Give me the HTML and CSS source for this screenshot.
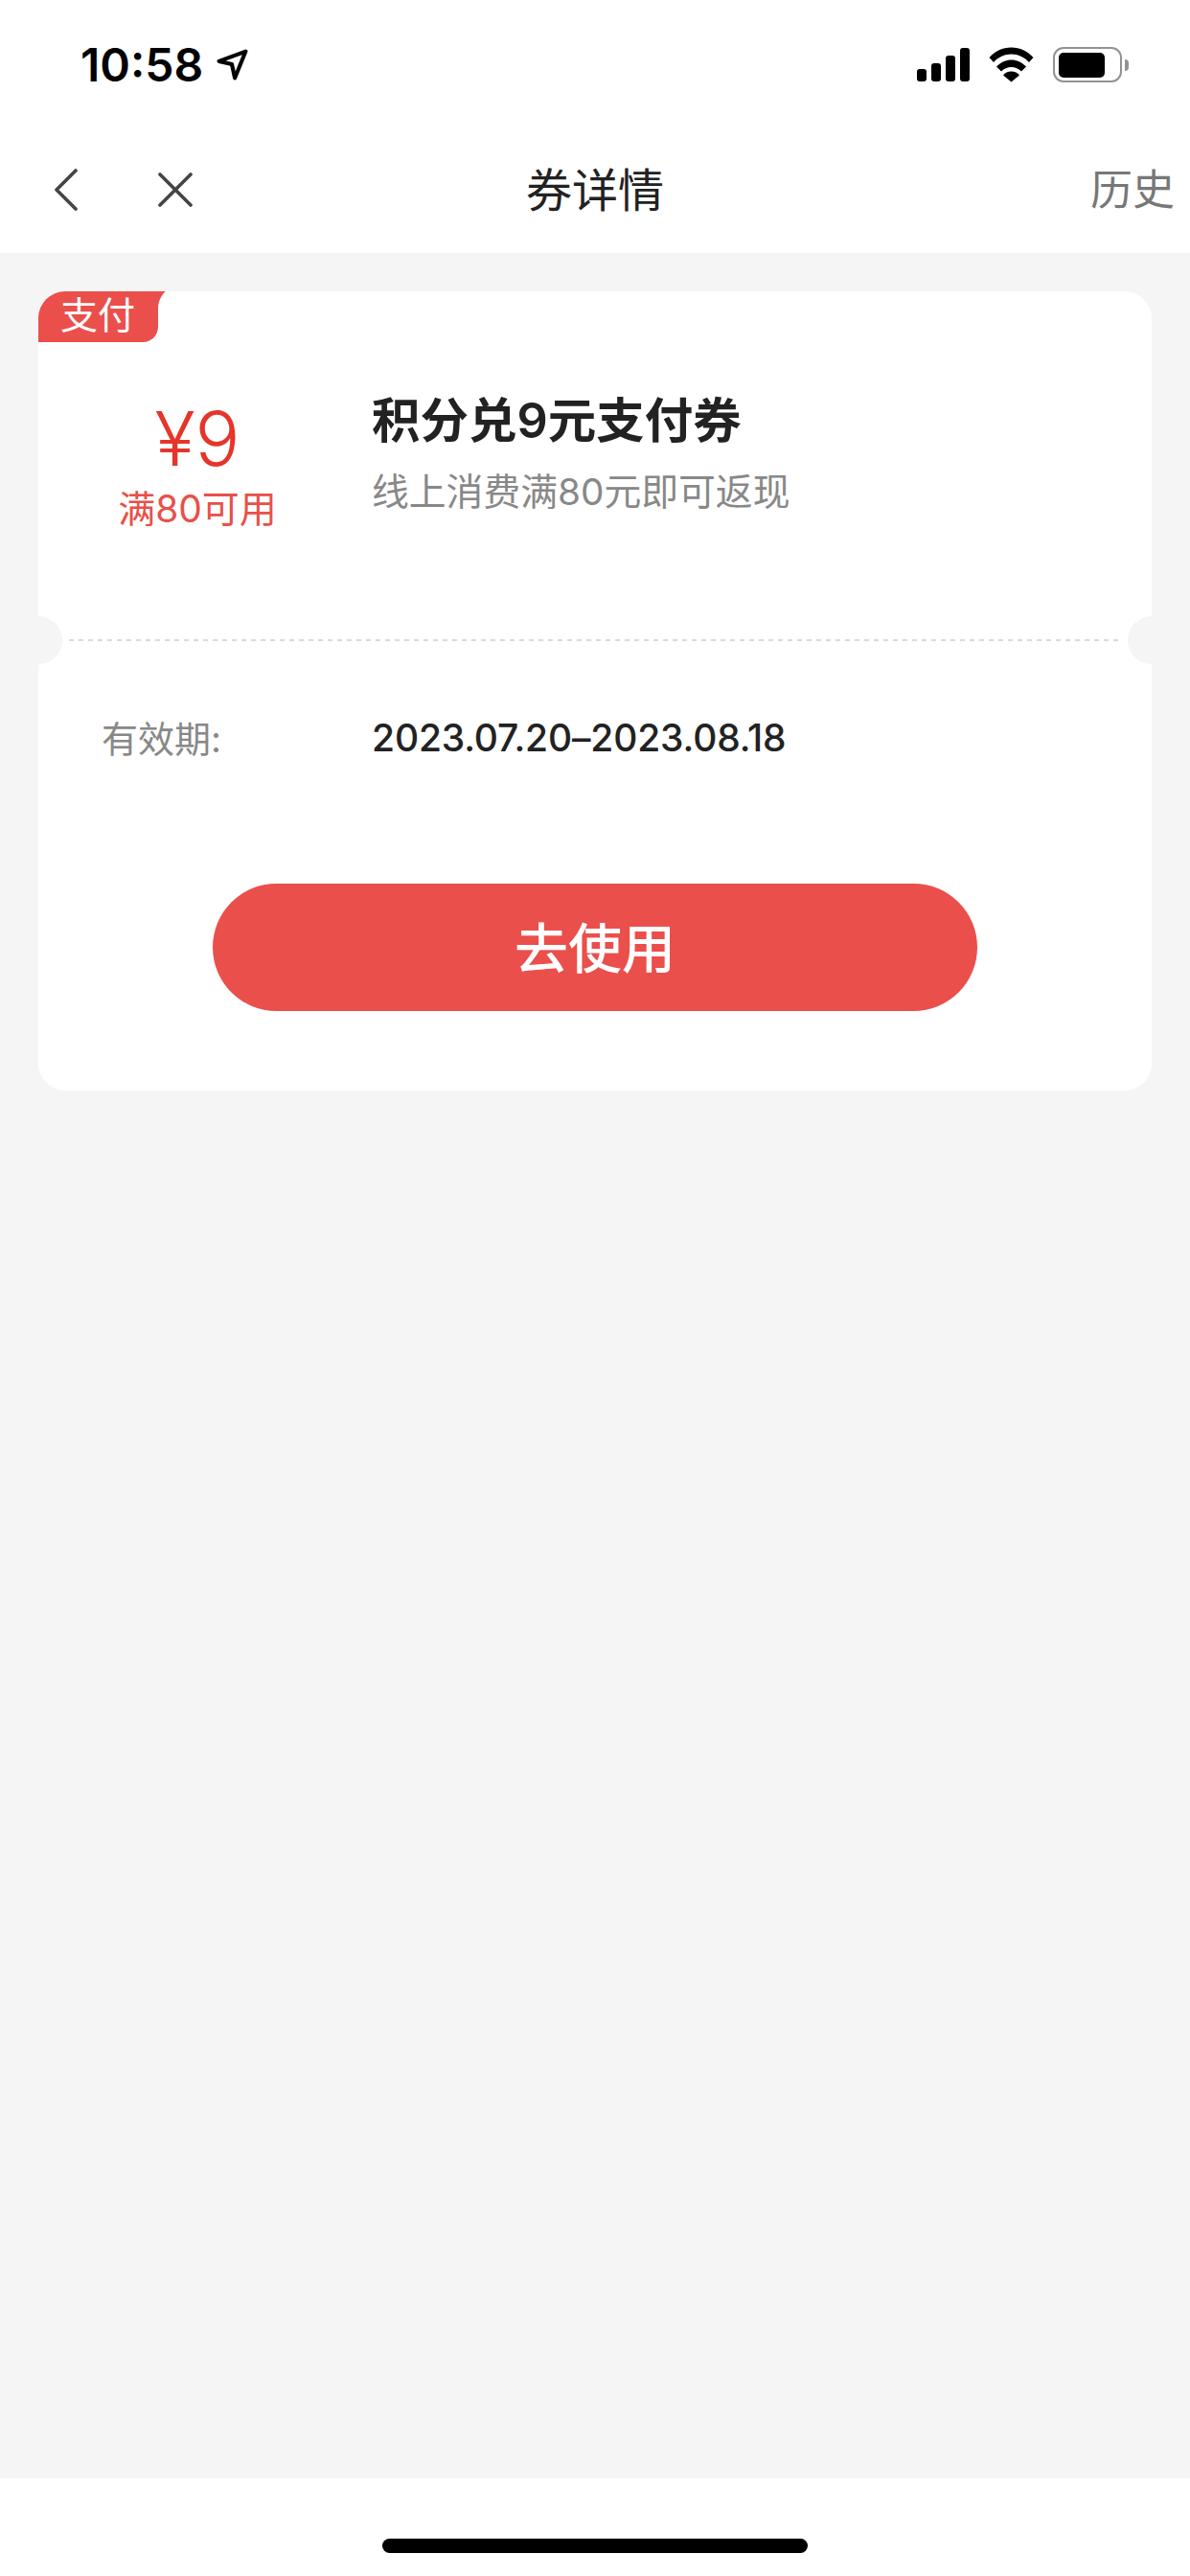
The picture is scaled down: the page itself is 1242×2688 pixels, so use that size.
FILE: index.html
```html
<!DOCTYPE html>
<html lang="zh-CN">
<head>
    <meta charset="UTF-8">
    <meta name="viewport" content="width=device-width, initial-scale=1.0">
    <title>券详情</title>
    <link rel="stylesheet" href="styles.css">
</head>
<body>
    <div class="status-bar">
        <div class="status-left">
            <span class="time">10:58</span>
            <svg class="location-icon" viewBox="0 0 32 32" width="33" height="33">
                <path d="M29.5 2.5L2.5 12.5L15.5 15.5L18.5 29.5Z" fill="none" stroke="#000" stroke-width="4" stroke-linejoin="round"/>
            </svg>
        </div>
        <div class="status-right">
            <div class="signal">
                <span class="bar bar-1"></span>
                <span class="bar bar-2"></span>
                <span class="bar bar-3"></span>
                <span class="bar bar-4"></span>
            </div>
            <svg class="wifi-icon" viewBox="0 0 47 37" width="47" height="37">
                <path d="M0.5 11C6.5 4.5 14.5 0.5 23.5 0.5S40.5 4.5 46.5 11L42 16C37 10.5 30.5 7.5 23.5 7.5S10 10.5 5 16Z"/>
                <path d="M8 20.5C12.5 16 18 13.5 23.5 13.5S34.5 16 39 20.5L34 25.5C31 22.5 27.5 21 23.5 21S16 22.5 13 25.5Z"/>
                <path d="M15 29.5C17 27 20 25.5 23.5 25.5S30 27 32 29.5L23.5 36.5Z"/>
            </svg>
            <div class="battery">
                <div class="battery-body"><div class="battery-level"></div></div>
                <div class="battery-tip"></div>
            </div>
        </div>
    </div>

    <div class="nav-bar">
        <div class="nav-left">
            <svg class="nav-icon back-icon" viewBox="0 0 24 44" width="24" height="44">
                <path d="M22 2L2 22L22 42" fill="none" stroke="#444" stroke-width="3.6" stroke-linecap="round" stroke-linejoin="round"/>
            </svg>
            <svg class="nav-icon close-icon" viewBox="0 0 36 36" width="36" height="36">
                <path d="M2 2L34 34M34 2L2 34" fill="none" stroke="#444" stroke-width="3.6" stroke-linecap="round"/>
            </svg>
        </div>
        <div class="nav-title">券详情</div>
        <div class="nav-right">历史</div>
    </div>

    <div class="content">
        <div class="coupon">
            <div class="tag">支付</div>
            <span class="notch notch-left"></span>
            <span class="notch notch-right"></span>

            <div class="offer">
                <div class="price-col">
                    <div class="price">¥9</div>
                    <div class="price-limit">满80可用</div>
                </div>
                <div class="offer-info">
                    <div class="offer-title">积分兑9元支付券</div>
                    <div class="offer-desc">线上消费满80元即可返现</div>
                </div>
            </div>

            <div class="divider"></div>

            <div class="validity">
                <span class="validity-label">有效期:</span>
                <span class="validity-date">2023.07.20–2023.08.18</span>
            </div>

            <button class="use-btn" type="button">去使用</button>
        </div>
    </div>

    <div class="home-area">
        <div class="home-indicator"></div>
    </div>
</body>
</html>
```

FILE: styles.css
```css
html {
    background-color: #f5f5f5;
}
body {
    margin: 0;
    padding: 0;
    height: 2688px;
    display: flex;
    flex-direction: column;
    font-family: Inter, "Noto Sans CJK SC", sans-serif;
}

/* status bar */
.status-bar {
    height: 135px;
    padding: 0 64px 0 84px;
    display: flex;
    align-items: center;
    justify-content: space-between;
    background-color: #fff;
}
.status-left {
    display: flex;
    align-items: center;
    gap: 14px;
}
.time {
    font-size: 48px;
    font-weight: 600;
    line-height: 56px;
    color: #000;
}
.status-right {
    display: flex;
    align-items: center;
    gap: 20px;
}
.signal {
    display: flex;
    align-items: flex-end;
    gap: 5px;
    height: 35px;
}
.bar {
    width: 10px;
    background-color: #000;
    border-radius: 3px;
}
.bar-1 { height: 13px; }
.bar-2 { height: 19px; }
.bar-3 { height: 27px; }
.bar-4 { height: 35px; }
.battery {
    display: flex;
    align-items: center;
    gap: 3px;
}
.battery-body {
    box-sizing: border-box;
    width: 72px;
    height: 37px;
    padding: 3.5px;
    border: 2.5px solid #929292;
    border-radius: 11px;
}
.battery-level {
    width: 48px;
    height: 100%;
    background-color: #000;
    border-radius: 5px;
}
.battery-tip {
    width: 4px;
    height: 12px;
    background-color: #929292;
    border-radius: 0 4px 4px 0;
}

/* nav bar */
.nav-bar {
    height: 126px;
    padding: 0 16px 3px;
    display: flex;
    align-items: center;
    background-color: #fff;
}
.nav-left {
    flex: 1;
    display: flex;
    align-items: center;
}
.back-icon {
    margin-left: 41px;
}
.close-icon {
    margin-left: 84px;
}
.nav-title {
    margin-bottom: 6px;
    font-size: 48px;
    color: #222;
}
.nav-right {
    flex: 1;
    margin-bottom: 6px;
    text-align: right;
    font-size: 44px;
    color: #777;
}

/* coupon card */
.content {
    flex: 1;
    padding: 40px 40px 0;
}
.coupon {
    position: relative;
    overflow: hidden;
    background-color: #fff;
    border-radius: 28px;
}
.tag {
    box-sizing: border-box;
    width: 133px;
    height: 53px;
    padding-left: 23px;
    font-size: 39px;
    line-height: 50px;
    color: #fff;
    background-color: #eb4f4b;
    clip-path: path("M0 0H133C129 3 125 10 125 18V37C125 46 118 53 109 53H0Z");
}
.notch {
    position: absolute;
    top: 339px;
    width: 50px;
    height: 50px;
    border-radius: 50%;
    background-color: #f5f5f5;
}
.notch-left { left: -25px; }
.notch-right { right: -25px; }

.offer {
    box-sizing: border-box;
    height: 310px;
    display: flex;
}
.price-col {
    width: 332px;
    margin-right: 16px;
    padding-top: 56px;
    text-align: center;
}
.price {
    font-size: 78px;
    font-weight: 300;
    line-height: 90px;
    color: #e5352a;
}
.price-limit {
    margin-top: 6px;
    font-size: 39px;
    line-height: 44px;
    color: #e8504a;
}
.offer-info {
    padding-top: 52px;
}
.offer-title {
    font-size: 50.5px;
    font-weight: 600;
    line-height: 60px;
    color: #222;
}
.offer-desc {
    margin-top: 19px;
    font-size: 38.8px;
    line-height: 50px;
    color: #888;
}
.divider {
    height: 2px;
    margin: 0 30px 0 32px;
    background-image: repeating-linear-gradient(to right, #d9d9d9 0, #d9d9d9 5px, transparent 5px, transparent 10px);
}
.validity {
    display: flex;
    align-items: center;
    height: 50px;
    padding: 75px 0 0 66px;
}
.validity-label {
    width: 282px;
    margin-bottom: 2px;
    font-size: 38px;
    color: #888;
}
.validity-date {
    font-size: 39px;
    font-weight: 500;
    letter-spacing: -0.15px;
    color: #222;
}
.use-btn {
    display: block;
    width: 798px;
    height: 133px;
    margin: 128px auto 83px;
    padding: 0 0 6px;
    border: none;
    border-radius: 67px;
    background-color: #eb4f4b;
    color: #fff;
    font-family: inherit;
    font-size: 56px;
    font-weight: 500;
}

/* bottom */
.home-area {
    height: 102px;
    display: flex;
    justify-content: center;
    background-color: #fff;
}
.home-indicator {
    width: 444px;
    height: 15px;
    margin-top: 63px;
    background-color: #000;
    border-radius: 8px;
}
```
